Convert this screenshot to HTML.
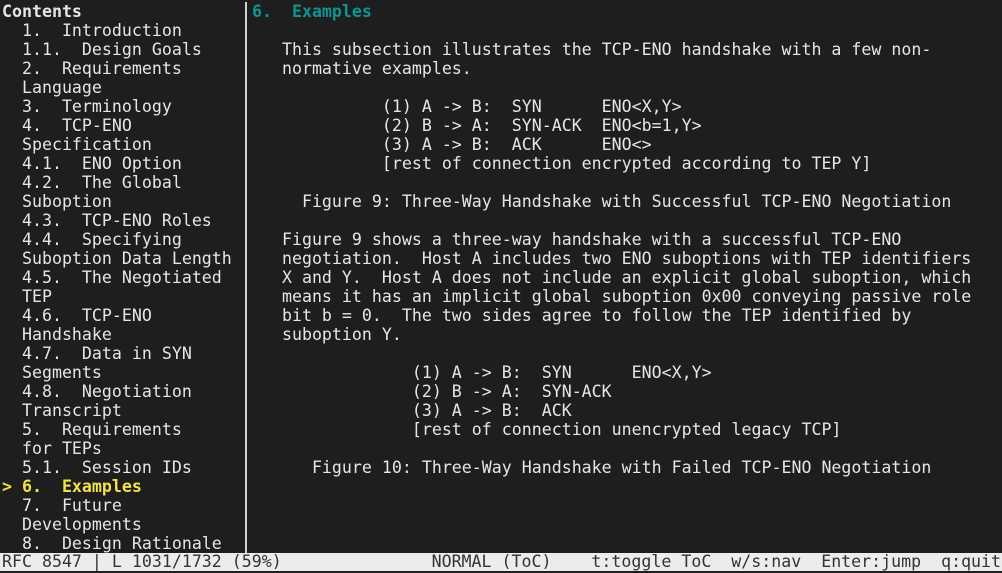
<!DOCTYPE html>
<html><head><meta charset="utf-8"><style>
html,body{margin:0;padding:0;width:1002px;height:573px;overflow:hidden;background:#1e1e1e;}
pre{margin:0;position:absolute;font-family:"DejaVu Sans Mono","Liberation Mono",monospace;font-size:16.6px;line-height:19px;color:#e6e6e6;white-space:pre;}
.sep{position:absolute;left:245px;top:2px;width:2px;height:551px;background:#d0d0d0;}
.b{font-weight:bold;}
.t{color:#0f9393;font-weight:bold;}
.y{color:#f2e24a;font-weight:bold;}
.status{position:absolute;left:0;top:553px;width:1002px;height:18px;background:#ececec;}
.status pre{color:#333;top:-1px;left:2px;}
</style></head><body>
<pre style="left:2px;top:2px"><span class="b">Contents</span>
  1.  Introduction
  1.1.  Design Goals
  2.  Requirements
  Language
  3.  Terminology
  4.  TCP-ENO
  Specification
  4.1.  ENO Option
  4.2.  The Global
  Suboption
  4.3.  TCP-ENO Roles
  4.4.  Specifying
  Suboption Data Length
  4.5.  The Negotiated
  TEP
  4.6.  TCP-ENO
  Handshake
  4.7.  Data in SYN
  Segments
  4.8.  Negotiation
  Transcript
  5.  Requirements
  for TEPs
  5.1.  Session IDs
<span class="y">&gt; 6.  Examples</span>
  7.  Future
  Developments
  8.  Design Rationale</pre>
<div class="sep"></div>
<pre style="left:252px;top:2px"><span class="t">6.  Examples</span>

   This subsection illustrates the TCP-ENO handshake with a few non-
   normative examples.

             (1) A -&gt; B:  SYN      ENO&lt;X,Y&gt;
             (2) B -&gt; A:  SYN-ACK  ENO&lt;b=1,Y&gt;
             (3) A -&gt; B:  ACK      ENO&lt;&gt;
             [rest of connection encrypted according to TEP Y]

     Figure 9: Three-Way Handshake with Successful TCP-ENO Negotiation

   Figure 9 shows a three-way handshake with a successful TCP-ENO
   negotiation.  Host A includes two ENO suboptions with TEP identifiers
   X and Y.  Host A does not include an explicit global suboption, which
   means it has an implicit global suboption 0x00 conveying passive role
   bit b = 0.  The two sides agree to follow the TEP identified by
   suboption Y.

                (1) A -&gt; B:  SYN      ENO&lt;X,Y&gt;
                (2) B -&gt; A:  SYN-ACK
                (3) A -&gt; B:  ACK
                [rest of connection unencrypted legacy TCP]

      Figure 10: Three-Way Handshake with Failed TCP-ENO Negotiation</pre>
<div class="status"><pre>RFC 8547 | L 1031/1732 (59%)               NORMAL (ToC)    t:toggle ToC  w/s:nav  Enter:jump  q:quit</pre></div>
</body></html>
